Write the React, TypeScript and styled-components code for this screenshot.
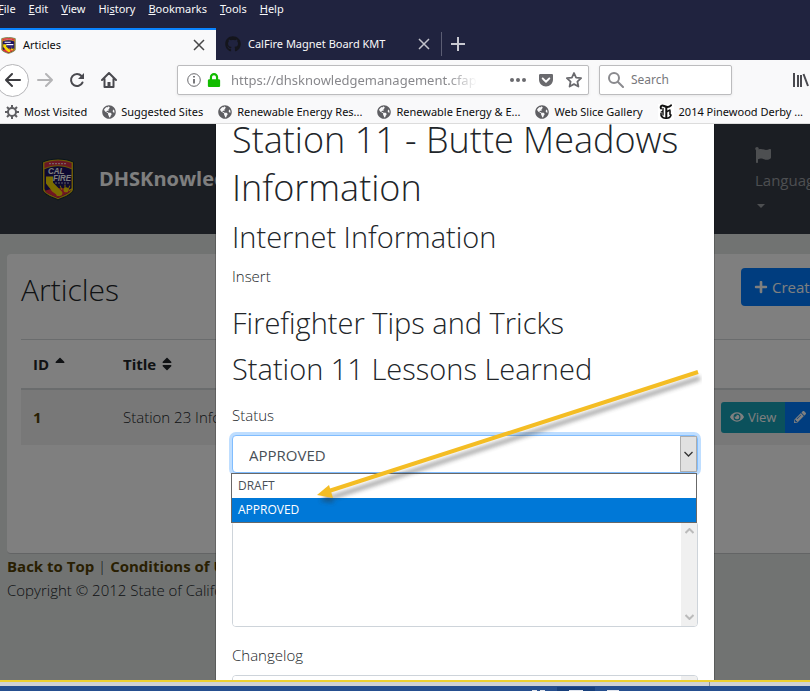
import React from "react";
import styled, { createGlobalStyle, css } from "styled-components";
import {
  FaEye,
  FaFlag,
  FaGetPocket,
  FaGithub,
  FaGlobeAmericas,
  FaLock,
  FaPencilAlt,
  FaPlus,
  FaSort,
  FaSortUp,
} from "react-icons/fa";

const GlobalStyle = createGlobalStyle`
  *, *::before, *::after { box-sizing: border-box; }
  body { margin: 0; background: #fff; }
  button, input, select, textarea { font: inherit; color: inherit; margin: 0; }
  button { border: 0; padding: 0; background: none; }
  a { color: inherit; text-decoration: none; }
  svg { display: block; flex: none; }
`;

const Screen = styled.div`
  height: 100vh;
  display: flex;
  flex-direction: column;
  overflow: hidden;
  font-family: "Open Sans", "Noto Sans", sans-serif;
`;

/* ---------- Browser chrome ---------- */

const Chrome = styled.header`
  flex: none;
  font-family: "Noto Sans", "Open Sans", sans-serif;
  font-size: 11px;
  line-height: 18px;
  color: #0c0c0d;
  background: #f9f9fa;
  border-bottom: 1px solid #dcdcdc;
  overflow: hidden;
`;

const MenuBar = styled.nav`
  display: flex;
  gap: 13px;
  height: 28px;
  margin-left: -2px;
  background: #20233f;
  color: #f9f9fa;
  align-items: flex-start;
`;

const MenuItem = styled.button`
  line-height: 18px;
  white-space: nowrap;
`;

const TabStrip = styled.div`
  display: flex;
  align-items: stretch;
  height: 32px;
  background: #20233f;
`;

const Tab = styled.div<{ $active?: boolean }>`
  display: flex;
  align-items: center;
  gap: 7px;
  width: ${(p) => (p.$active ? 216 : 225)}px;
  padding: ${(p) => (p.$active ? "0 11px 0 1px" : "0 11px 0 9px")};
  border-top: ${(p) => (p.$active ? "2px solid #0a84ff" : "0")};
  background: ${(p) => (p.$active ? "#f9f9fa" : "transparent")};
  color: ${(p) => (p.$active ? "#0c0c0d" : "#f9f9fa")};
`;

const TabTitle = styled.span`
  flex: 1;
  white-space: nowrap;
`;

const NewTab = styled.button`
  display: flex;
  align-items: center;
  margin: 4px 0;
  padding: 0 9px;
  border-left: 1px solid #5b5d73;
  color: #c8c8d0;
`;

const Toolbar = styled.div`
  display: flex;
  align-items: center;
  height: 40px;
  margin-left: -4px;
  color: #4a4a4f;
`;

const BackButton = styled.button`
  display: grid;
  place-items: center;
  width: 33px;
  height: 33px;
  border: 1px solid #b5b5b8;
  border-radius: 50%;
  background: #fff;
`;

const ToolButton = styled.button`
  display: grid;
  place-items: center;
  width: 32px;
  height: 32px;
`;

const fieldBox = css`
  display: flex;
  align-items: center;
  height: 30px;
  background: #fff;
  border: 1px solid #bcbcbe;
  border-radius: 2px;
  box-shadow: 0 1px 3px rgba(0, 0, 0, 0.08);
`;

const UrlBar = styled.div`
  ${fieldBox}
  flex: 1;
  min-width: 0;
  margin-left: 52px;
  padding: 0 6px 0 9px;
  gap: 6px;
  color: #6a6a6e;
`;

const UrlInput = styled.input`
  flex: none;
  width: 246px;
  margin-left: 4px;
  padding: 0;
  border: 0;
  outline: 0;
  background: transparent;
  color: #88888c;
  font-size: 13px;
  mask-image: linear-gradient(to right, #000 88%, transparent 100%);
`;

const UrlActions = styled.div`
  display: flex;
  flex: 1;
  align-items: center;
  justify-content: flex-end;
  gap: 12px;
`;

const SearchBox = styled.label`
  ${fieldBox}
  width: 133px;
  margin: 0 61px 0 10px;
  padding: 0 8px;
  gap: 7px;
  color: #8a8a8e;
`;

const SearchInput = styled.input`
  flex: 1;
  min-width: 0;
  border: 0;
  padding: 0;
  outline: 0;
  background: transparent;
  font-size: 12px;
  &::placeholder { color: #77777b; opacity: 1; }
`;

const Library = styled.button`
  width: 17px;
`;

const Bookmarks = styled.nav`
  display: flex;
  align-items: center;
  gap: 15px;
  height: 23px;
  padding-left: 5px;
`;

const Bookmark = styled.a`
  display: flex;
  align-items: center;
  gap: 5px;
  white-space: nowrap;
  svg { color: #5f5f63; }
`;

/* ---------- Web page ---------- */

const Viewport = styled.main`
  position: relative;
  flex: 1;
  min-height: 0;
  overflow: hidden;
  background: #e2e6e4;
  color: #212529;
  font-size: 15px;
  line-height: 24px;
`;

const Page = styled.div`
  min-width: 930px;
  font-weight: 300;
`;

const Navbar = styled.header`
  display: flex;
  align-items: center;
  height: 110px;
  padding: 0 91px 0 41px;
  background: #373d47;
`;

const Brand = styled.a`
  display: flex;
  align-items: center;
  gap: 24px;
  flex: 1;
  font-size: 20px;
  font-weight: 700;
  color: #fff;
`;

const Language = styled.button`
  display: flex;
  flex-direction: column;
  align-items: flex-start;
  gap: 5px;
  width: 84px;
  font-weight: 400;
  line-height: 24px;
  color: #9b9ea3;
`;

const Caret = styled.span`
  width: 0;
  margin: 7px 0 0 2px;
  border: 4px solid transparent;
  border-top-color: currentColor;
`;

const Card = styled.section`
  margin: 20px 7px 0;
  height: 300px;
  padding: 14px 14px 0;
  background: #fff;
  border-radius: 4px;
  border-bottom: 1px solid #c6c8ca;
`;

const CardHead = styled.div`
  display: flex;
  align-items: flex-start;
  justify-content: space-between;
  height: 71px;
`;

const PageTitle = styled.h2`
  margin: 0;
  font-size: 30px;
  font-weight: 300;
  line-height: 43px;
`;

const CreateButton = styled.button`
  display: flex;
  align-items: center;
  gap: 4px;
  width: 168px;
  height: 38px;
  padding: 0 13px;
  border-radius: 4px;
  background: #007bff;
  color: #fff;
  font-weight: 400;
  white-space: nowrap;
`;

const Table = styled.table`
  width: 100%;
  border-collapse: collapse;
  table-layout: fixed;
  th, td {
    padding: 0 12px;
    text-align: left;
    white-space: nowrap;
    border-top: 1px solid #d5d8db;
  }
  th { height: 49px; font-weight: 700; border-bottom: 2px solid #d5d8db; }
  td { height: 56px; background: #f0f0f0; }
  td:last-child { padding: 0; }
`;

const Column = styled.col<{ $width?: number }>`
  width: ${(p) => (p.$width ? `${p.$width}px` : "auto")};
`;

const SortLabel = styled.span`
  display: flex;
  align-items: center;
  gap: 3px;
`;

const IdLink = styled.a`
  font-weight: 700;
  color: #533f03;
`;

const ButtonGroup = styled.div`
  display: flex;
`;

const RowButton = styled.button<{ $tone: "info" | "primary" }>`
  display: flex;
  align-items: center;
  gap: 4px;
  height: 31px;
  padding: 0 9px;
  background: ${(p) => (p.$tone === "info" ? "#17a2b8" : "#007bff")};
  color: #fff;
  font-size: 13px;
  font-weight: 400;
  &:first-child { border-radius: 3px 0 0 3px; }
`;

const Footer = styled.footer`
  padding-left: 7px;
  a { font-weight: 700; color: #533f03; }
  p { margin: 0; }
`;

/* ---------- Modal ---------- */

const Backdrop = styled.div`
  position: absolute;
  inset: 0;
  display: grid;
  grid-template-columns: 215fr 500px 95fr;
  align-items: start;
  background: rgba(0, 0, 0, 0.5);
`;

/* The dialog is scrolled slightly past its first line. */
const Dialog = styled.div`
  grid-column: 2;
  margin-top: -8px;
  padding: 0 16px;
  background: #fff;
  background-clip: padding-box;
  border: 1px solid rgba(0, 0, 0, 0.2);
  border-width: 0 1px;
  font-weight: 300;
`;

const ArticleBody = styled.article`
  margin-bottom: 15px;
`;

const ArticleTitle = styled.h1`
  margin: 0 0 6px;
  font-size: 36px;
  font-weight: 300;
  line-height: 48px;
`;

const Subtitle = styled.h2`
  margin: 0 0 8px;
  font-size: 29px;
  font-weight: 300;
  line-height: 38px;
  white-space: nowrap;
`;

const Paragraph = styled.p`
  margin: 0 0 16px;
`;

const Field = styled.div<{ $space: number }>`
  position: relative;
  margin-bottom: ${(p) => p.$space}px;
`;

const Label = styled.label`
  display: block;
  margin-bottom: 8px;
`;

const SelectBox = styled.div`
  position: relative;
  display: flex;
  height: 38px;
  border: 1px solid #80bdff;
  border-radius: 4px;
  box-shadow: 0 0 0 3px #bfdeff;
  background: #fff;
`;

const Select = styled.select`
  flex: 1;
  appearance: none;
  border: 0;
  outline: 0;
  padding: 2px 16px 0;
  background: transparent;
  color: #495057;
  font-weight: 400;
`;

const DropArrow = styled.span`
  display: grid;
  place-items: center;
  width: 17px;
  background: #e1e1e1;
  border: 1px solid #adadad;
  color: #333;
`;

const OptionList = styled.ul`
  position: absolute;
  z-index: 1;
  top: 37px;
  left: -2px;
  right: 0;
  margin: 0;
  padding: 0;
  list-style: none;
  background: #fff;
  border: 1px solid #686868;
`;

const Option = styled.li<{ $selected?: boolean }>`
  padding: 0 6px;
  font-size: 12px;
  font-weight: 400;
  line-height: 24px;
  background: ${(p) => (p.$selected ? "#0078d7" : "#fff")};
  color: ${(p) => (p.$selected ? "#fff" : "#495057")};
`;

const TextFrame = styled.div`
  display: flex;
  height: 106px;
  border: 1px solid #ced4da;
  border-radius: 4px;
  overflow: hidden;
`;

const TextArea = styled.textarea`
  flex: 1;
  border: 0;
  outline: 0;
  resize: none;
`;

const ScrollTrack = styled.div`
  display: flex;
  flex-direction: column;
  justify-content: space-between;
  align-items: center;
  width: 16px;
  padding: 6px 0;
  background: #f0f0f0;
  color: #bbb;
`;

const Pointer = styled.svg`
  position: absolute;
  z-index: 2;
  top: -37px;
  left: 80px;
`;

/* ---------- Bottom edge ---------- */

const StatusEdge = styled.div`
  flex: none;
  display: flex;
  height: 6px;
  border-top: 2px solid #edd030;
  background: #d0d2d3;
`;

const EdgeMark = styled.span`
  flex: 1;
  border-right: 1px solid #909294;
  margin-right: 100px;
`;

const Taskbar = styled.div`
  flex: none;
  display: flex;
  align-items: flex-end;
  justify-content: flex-end;
  gap: 12px;
  height: 5px;
  padding-right: 191px;
  background: #264f8f;
`;

const TaskActive = styled.span`
  display: flex;
  align-items: flex-end;
  justify-content: center;
  width: 38px;
  height: 4px;
  background: #173f7c;
`;

const TaskMark = styled.span<{ $width: number }>`
  width: ${(p) => p.$width}px;
  height: 1px;
  background: #dfe4ee;
`;

const TaskPair = styled.span`
  display: flex;
  gap: 3px;
`;

/* ---------- Icons ---------- */

const Shield = ({ size, small }: { size: number; small?: boolean }) => (
  <svg width={size} height={small ? size + 2 : size + 9} viewBox="0 0 34 42" preserveAspectRatio="none">
    <path d="M17 1C11 1 6 2 1.500 4V31c1 5 9 7 15.500 10 6.500-3 14.500-5 15.500-10V4C28 2 23 1 17 1Z" fill="#d8b40c" stroke="#10283a" />
    <path d="M3.500 5C12 1.500 22 1.500 30.500 5v5C23 6 11 6 3.500 10Z" fill="#d62f49" />
    <path d="M3.500 11C12 7 22 7 30.500 11v19c-1 4-7 6-13.500 9-6.500-3-12.500-5-13.500-9Z" fill="#1c1262" />
    <path d="M4 32c7-3 19-4 26-1-1 3-7 5-13 8-6-3-12-4-13-7Z" fill="#e32b43" />
    <g stroke="#f7d900">
      <path d="M24 31v-5m-3 5-2-4m8 4 2-4m-1 5 3-2" />
    </g>
    <circle cx="25" cy="31" r="2.500" fill="#f7d900" />
    <path d="M5 18h7v6l9 9c1 2 0 4-2 4h-3c-1-3-5-3-6-6l-5-6Z" fill="#f7d900" />
    {!small && (
      <g fill="#fff" fontFamily="Liberation Sans" fontWeight="700" fontStyle="italic">
        <text x="7" y="16" fontSize="8">CAL</text>
        <text x="12" y="22" fontSize="8">FIRE</text>
      </g>
    )}
    {small && <path d="M8 13h14M12 19h16" stroke="#fff" strokeWidth="3" />}
    <path d="M14 24.500h14M8 5.500h18" stroke="#fff" strokeDasharray="2 1" opacity="0.700" />
  </svg>
);

const Cross = () => (
  <svg width="12" height="12" viewBox="0 0 12 12" fill="none" stroke="currentColor" strokeWidth="1.500" opacity="0.750">
    <path d="m1 1 10 10M11 1 1 11" />
  </svg>
);

const Arrow = ({ forward }: { forward?: boolean }) => (
  <svg width="16" height="16" viewBox="0 0 16 16" fill="none" stroke={forward ? "#b4b4b6" : "#3c3c40"} strokeWidth="2" strokeLinecap="round" strokeLinejoin="round">
    <path d={forward ? "M1 8h14M9 2l6 6-6 6" : "M15 8H1M7 2 1 8l6 6"} />
  </svg>
);

const Reload = () => (
  <svg width="16" height="16" viewBox="0 0 16 16" fill="none" stroke="currentColor" strokeWidth="2">
    <path d="M13.500 10.500A6 6 0 1 1 12.500 4" strokeLinecap="round" />
    <path d="M15 1v6H9Z" fill="currentColor" stroke="none" />
  </svg>
);

const Home = () => (
  <svg width="16" height="16" viewBox="0 0 16 16" fill="none" stroke="currentColor" strokeWidth="2" strokeLinejoin="round" strokeLinecap="round">
    <path d="m1 8 7-7 7 7M3.500 7v8h9V7" />
    <path d="M8 15v-5" strokeWidth="3" strokeLinecap="butt" />
  </svg>
);

const Info = () => (
  <svg width="14" height="14" viewBox="0 0 14 14" fill="none" stroke="currentColor">
    <circle cx="7" cy="7" r="6.300" />
    <path d="M7 6v4.500M7 3v1.600" strokeWidth="1.800" />
  </svg>
);

const Dots = () => (
  <svg width="16" height="16" viewBox="0 0 16 16" fill="currentColor">
    <circle cx="2" cy="8" r="2" />
    <circle cx="8" cy="8" r="2" />
    <circle cx="14" cy="8" r="2" />
  </svg>
);

const Star = () => (
  <svg width="16" height="16" viewBox="0 0 16 16" fill="none" stroke="currentColor" strokeWidth="1.800" strokeLinejoin="round">
    <path d="m8 1 2.100 4.600 5 .6-3.700 3.400 1 4.900L8 12.100l-4.400 2.400 1-4.900L.9 6.200l5-.6Z" />
  </svg>
);

const Magnifier = () => (
  <svg width="16" height="16" viewBox="0 0 16 16" fill="none" stroke="currentColor" strokeWidth="2" strokeLinecap="round">
    <circle cx="6" cy="6" r="5" />
    <path d="m10 10 5 5" />
  </svg>
);

const Books = () => (
  <svg width="16" height="14" viewBox="0 0 16 14" fill="none" stroke="#4a4a4f" strokeWidth="2">
    <path d="M1 0v14M5 2v12M8 2v12M10.500 1l4.500 12" />
  </svg>
);

const Gear = () => (
  <svg width="14" height="14" viewBox="0 0 14 14" fill="none" stroke="currentColor" strokeWidth="2">
    <circle cx="7" cy="7" r="4" />
    <path d="M7 0v3M7 11v3M0 7h3M11 7h3M2 2l2.200 2.200M9.800 9.800 12 12M12 2 9.800 4.200M4.200 9.800 2 12" />
  </svg>
);

/* Newspaper emblem on a white tile. */
const NewsLogo = () => (
  <svg width="16" height="16" viewBox="0 0 16 16" fill="none">
    <rect width="16" height="16" fill="#fff" />
    <g stroke="#111" strokeLinecap="round">
      <path d="M3 4.500C2 2 4 1 6 2s5 1.500 7-.7" strokeWidth="2" />
      <path d="M8.300 3v11" strokeWidth="2" />
      <path d="M5 4.500v6.500M3.200 8 5 7M12 6l-3 1.500" strokeWidth="1.400" />
      <path d="M3 9.500c-.5 5.500 8.500 6.500 10 1.500M12 7v3.500" strokeWidth="1.600" />
    </g>
  </svg>
);

const Chevron = ({ up, bold }: { up?: boolean; bold?: boolean }) => (
  <svg width="9" height="6" viewBox="0 0 9 6" fill="none" stroke="currentColor" strokeWidth={bold ? 2 : 1.3}>
    <path d={up ? "m.5 5 4-4 4 4" : "m.5 1 4 4 4-4"} />
  </svg>
);

const menus: Array<[string, string, string]> = [
  ["", "F", "ile"],
  ["", "E", "dit"],
  ["", "V", "iew"],
  ["Hi", "s", "tory"],
  ["", "B", "ookmarks"],
  ["", "T", "ools"],
  ["", "H", "elp"],
];

const sites = ["Suggested Sites", "Renewable Energy Res...", "Renewable Energy & E...", "Web Slice Gallery"];

export default function App() {
  return (
    <Screen>
      <GlobalStyle />
      <Chrome>
        <MenuBar aria-label="Menu bar">
          {menus.map(([before, key, after]) => (
            <MenuItem key={key + after}>
              {before}
              <u>{key}</u>
              {after}
            </MenuItem>
          ))}
        </MenuBar>
        <TabStrip>
          <Tab $active>
            <Shield size={15} small />
            <TabTitle>Articles</TabTitle>
            <button aria-label="Close Articles"><Cross /></button>
          </Tab>
          <Tab>
            <FaGithub size={16} color="#14151c" />
            <TabTitle>CalFire Magnet Board KMT</TabTitle>
            <button aria-label="Close CalFire Magnet Board KMT"><Cross /></button>
          </Tab>
          <NewTab aria-label="New tab">
            <svg width="14" height="14" viewBox="0 0 14 14" stroke="currentColor" strokeWidth="2">
              <path d="M7 0v14M0 7h14" />
            </svg>
          </NewTab>
        </TabStrip>
        <Toolbar>
          <BackButton aria-label="Back"><Arrow /></BackButton>
          <ToolButton aria-label="Forward"><Arrow forward /></ToolButton>
          <ToolButton aria-label="Reload"><Reload /></ToolButton>
          <ToolButton aria-label="Home"><Home /></ToolButton>
          <UrlBar>
            <Info />
            <FaLock size={14} color="#12bc00" />
            <UrlInput aria-label="Address" defaultValue="https://dhsknowledgemanagement.cfap" />
            <UrlActions>
              <button aria-label="Page actions"><Dots /></button>
              <button aria-label="Save to Pocket"><FaGetPocket size={16} /></button>
              <button aria-label="Bookmark this page"><Star /></button>
            </UrlActions>
          </UrlBar>
          <SearchBox>
            <Magnifier />
            <SearchInput placeholder="Search" aria-label="Search" />
          </SearchBox>
          <Library aria-label="Library"><Books /></Library>
        </Toolbar>
        <Bookmarks aria-label="Bookmarks">
          <Bookmark href="#most-visited"><Gear />Most Visited</Bookmark>
          {sites.map((name) => (
            <Bookmark key={name} href="#site"><FaGlobeAmericas size={14} />{name}</Bookmark>
          ))}
          <Bookmark href="#derby"><NewsLogo />2014 Pinewood Derby ...</Bookmark>
        </Bookmarks>
      </Chrome>

      <Viewport>
        <Page>
          <Navbar>
            <Brand href="#home">
              <Shield size={34} />
              DHSKnowledgeManagement
            </Brand>
            <Language>
              <FaFlag size={16} />
              Language
              <Caret />
            </Language>
          </Navbar>
          <Card>
            <CardHead>
              <PageTitle>Articles</PageTitle>
              <CreateButton><FaPlus size={14} />Create new Article</CreateButton>
            </CardHead>
            <Table>
              <colgroup>
                <Column $width={90} />
                <Column />
                <Column $width={188} />
              </colgroup>
              <thead>
                <tr>
                  <th><SortLabel>ID <FaSortUp size={16} /></SortLabel></th>
                  <th><SortLabel>Title <FaSort size={16} /></SortLabel></th>
                  <th aria-label="Actions" />
                </tr>
              </thead>
              <tbody>
                <tr>
                  <td><IdLink href="#1">1</IdLink></td>
                  <td>Station 23 Information</td>
                  <td>
                    <ButtonGroup>
                      <RowButton $tone="info"><FaEye size={14} />View</RowButton>
                      <RowButton $tone="primary"><FaPencilAlt size={12} />Edit</RowButton>
                    </ButtonGroup>
                  </td>
                </tr>
              </tbody>
            </Table>
          </Card>
          <Footer>
            <p><a href="#top">Back to Top</a> | <a href="#conditions">Conditions of Use</a></p>
            <p>Copyright © 2012 State of California</p>
          </Footer>
        </Page>

        <Backdrop>
          <Dialog role="dialog" aria-label="Edit article">
            <ArticleBody>
              <ArticleTitle>Station 11 - Butte Meadows Information</ArticleTitle>
              <Subtitle>Internet Information</Subtitle>
              <Paragraph>Insert</Paragraph>
              <Subtitle>Firefighter Tips and Tricks</Subtitle>
              <Subtitle>Station 11 Lessons Learned</Subtitle>
            </ArticleBody>
            <Field $space={48}>
              <Label htmlFor="status">Status</Label>
              <SelectBox>
                <Select id="status" defaultValue="APPROVED">
                  <option>DRAFT</option>
                  <option>APPROVED</option>
                </Select>
                <DropArrow><Chevron /></DropArrow>
                <OptionList role="listbox" aria-label="Status">
                  <Option role="option" aria-selected={false}>DRAFT</Option>
                  <Option role="option" aria-selected $selected>APPROVED</Option>
                </OptionList>
              </SelectBox>
              <Pointer width="390" height="145" viewBox="0 0 390 145">
                <defs>
                  <filter id="soft" x="-5%" y="-10%" width="110%" height="125%">
                    <feGaussianBlur stdDeviation="2" />
                  </filter>
                </defs>
                <g transform="translate(2 6)" filter="url(#soft)" opacity="0.450">
                  <path d="M386 6 19 125" stroke="#333" strokeWidth="4" />
                  <path d="M6 129 16 120 20 131Z" fill="#333" />
                </g>
                <path d="M386 6 17 125" stroke="#f4bd24" strokeWidth="4" />
                <path d="M5 129 17 119 21 132Z" fill="#f4bd24" />
              </Pointer>
            </Field>
            <Field $space={16}>
              <TextFrame>
                <TextArea aria-label="Comment" />
                <ScrollTrack><Chevron up bold /><Chevron bold /></ScrollTrack>
              </TextFrame>
            </Field>
            <Field $space={16}>
              <Label htmlFor="changelog">Changelog</Label>
              <TextFrame>
                <TextArea id="changelog" />
                <ScrollTrack><Chevron up bold /><Chevron bold /></ScrollTrack>
              </TextFrame>
            </Field>
          </Dialog>
        </Backdrop>
      </Viewport>

      <StatusEdge><EdgeMark /></StatusEdge>
      <Taskbar>
        <TaskPair><TaskMark $width={5} /><TaskMark $width={5} /></TaskPair>
        <TaskActive><TaskMark $width={14} /></TaskActive>
        <TaskMark $width={12} />
      </Taskbar>
    </Screen>
  );
}
